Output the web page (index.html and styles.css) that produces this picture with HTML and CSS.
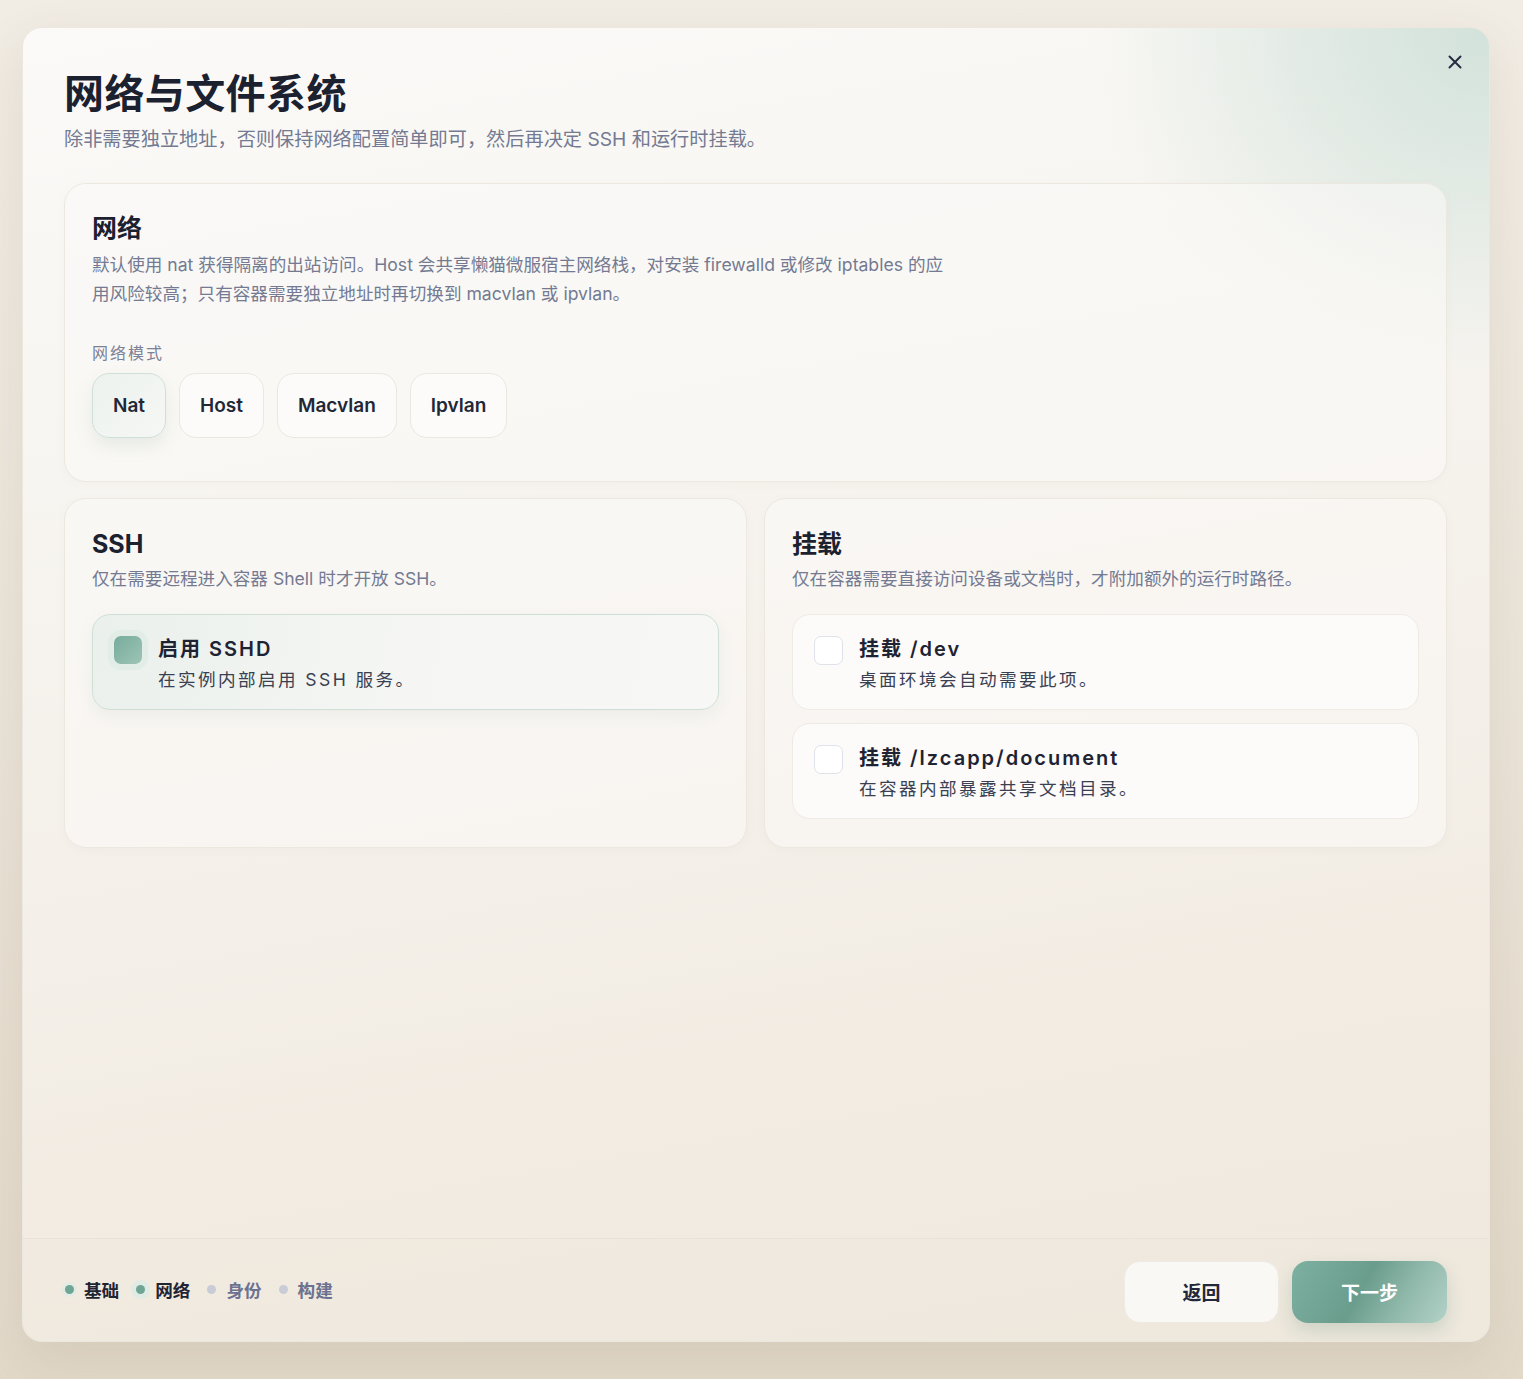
FILE: index.html
```html
<!DOCTYPE html>
<html lang="zh-CN">
<head>
  <meta charset="UTF-8" />
  <meta name="viewport" content="width=device-width, initial-scale=1.0"/>
  <title>网络与文件系统</title>
  <link rel="stylesheet" href="styles.css">
</head>
<body>
  <div class="dialog">
    <button class="close" aria-label="关闭">
      <svg width="18" height="18" viewBox="0 0 18 18"><path d="M3.5 3.5 L14.5 14.5 M14.5 3.5 L3.5 14.5" stroke="#262b40" stroke-width="2" stroke-linecap="round"/></svg>
    </button>

    <div class="content">
      <h1 class="title">网络与文件系统</h1>
      <p class="subtitle">除非需要独立地址，否则保持网络配置简单即可，然后再决定 SSH 和运行时挂载。</p>

      <section class="card network">
        <h2>网络</h2>
        <p class="desc wide">默认使用 nat 获得隔离的出站访问。Host 会共享懒猫微服宿主网络栈，对安装 firewalld 或修改 iptables 的应用风险较高；只有容器需要独立地址时再切换到 macvlan 或 ipvlan。</p>
        <div class="field-label">网络模式</div>
        <div class="modes">
          <button class="mode active">Nat</button>
          <button class="mode">Host</button>
          <button class="mode">Macvlan</button>
          <button class="mode">Ipvlan</button>
        </div>
      </section>

      <div class="row">
        <section class="card">
          <h2>SSH</h2>
          <p class="desc">仅在需要远程进入容器 Shell 时才开放 SSH。</p>
          <div class="options">
            <label class="option checked">
              <span class="box"></span>
              <span class="opt-text">
                <span class="opt-title">启用 SSHD</span>
                <span class="opt-sub">在实例内部启用 SSH 服务。</span>
              </span>
            </label>
          </div>
        </section>

        <section class="card">
          <h2>挂载</h2>
          <p class="desc">仅在容器需要直接访问设备或文档时，才附加额外的运行时路径。</p>
          <div class="options">
            <label class="option">
              <span class="box"></span>
              <span class="opt-text">
                <span class="opt-title">挂载 /dev</span>
                <span class="opt-sub">桌面环境会自动需要此项。</span>
              </span>
            </label>
            <label class="option">
              <span class="box"></span>
              <span class="opt-text">
                <span class="opt-title">挂载 /lzcapp/document</span>
                <span class="opt-sub">在容器内部暴露共享文档目录。</span>
              </span>
            </label>
          </div>
        </section>
      </div>
    </div>

    <footer class="footer">
      <div class="steps">
        <span class="step done"><i></i>基础</span>
        <span class="step current"><i></i>网络</span>
        <span class="step"><i></i>身份</span>
        <span class="step"><i></i>构建</span>
      </div>
      <div class="actions">
        <button class="btn back">返回</button>
        <button class="btn next">下一步</button>
      </div>
    </footer>
  </div>
</body>
</html>
```

FILE: styles.css
```css
body {
  margin: 0;
  padding: 27px 33px 37px 22px;
  min-height: 1379px;
  box-sizing: border-box;
  font-family: Inter, "Noto Sans CJK SC", sans-serif;
  color: #1f2433;
  background:
    linear-gradient(180deg, #f1ece4 0%, #ebe4d9 50%, #e2d9c9 100%);
}

.dialog {
  position: relative;
  height: 1315px;
  border-radius: 20px;
  border: 1px solid #ece7df;
  box-sizing: border-box;
  display: flex;
  flex-direction: column;
  overflow: hidden;
  box-shadow: 0 18px 50px rgba(120, 100, 70, 0.12);
  background:
    radial-gradient(ellipse 500px 430px at 100% 0%, #d2e2db 0%, rgba(213, 227, 220, 0.65) 35%, rgba(240, 236, 228, 0) 80%),
    linear-gradient(170deg, #fbfaf8 0%, #f6f3ee 40%, #f2ece3 75%, #efe8dd 100%);
}

.close {
  position: absolute;
  top: 25px;
  right: 24px;
  width: 20px;
  height: 20px;
  padding: 0;
  border: none;
  background: none;
  cursor: pointer;
}

.content {
  flex: 1;
  padding: 40px 42px 0 41px;
}

.title {
  margin: 0;
  font-size: 40px;
  line-height: 52px;
  font-weight: 700;
  color: #1c2130;
  letter-spacing: 0.4px;
}

.subtitle {
  margin: 6px 0 0;
  font-size: 19.2px;
  line-height: 26px;
  color: #737a92;
}

.card {
  background: rgba(251, 250, 247, 0.55);
  border: 1px solid #ece8e0;
  border-radius: 22px;
  padding: 26px 27px 28px;
  box-shadow: 0 2px 10px rgba(140, 120, 90, 0.04);
}

.network {
  margin-top: 31px;
  padding-bottom: 43px;
}

.card h2 {
  margin: 0;
  font-size: 25px;
  line-height: 36px;
  font-weight: 700;
  color: #1c2130;
}

.desc {
  margin: 4px 0 0;
  font-size: 17.6px;
  line-height: 29px;
  color: #737a92;
}

.desc.wide {
  max-width: 862px;
}

.field-label {
  margin-top: 32px;
  font-size: 16px;
  color: #7b8197;
  letter-spacing: 2px;
}

.modes {
  display: flex;
  gap: 13px;
  margin-top: 9px;
}

.mode {
  height: 65px;
  padding: 0 20px;
  border-radius: 17px;
  border: 1px solid #ebe8e2;
  background: #fcfbf9;
  font-family: inherit;
  font-size: 19px;
  font-weight: 600;
  color: #222738;
  cursor: pointer;
}

.mode.active {
  background: linear-gradient(135deg, #ecf2ef, #f6f7f4);
  border-color: #cfe0d9;
  box-shadow: 0 8px 18px rgba(90, 130, 115, 0.12);
}

.row {
  display: grid;
  grid-template-columns: 1fr 1fr;
  gap: 17px;
  margin-top: 16px;
}

.row .card {
  height: 350px;
  box-sizing: border-box;
  padding-top: 27px;
}

.row .desc {
  margin-top: 2px;
}

.options {
  display: flex;
  flex-direction: column;
  gap: 13px;
  margin-top: 21px;
}

.option {
  display: flex;
  align-items: flex-start;
  gap: 16px;
  height: 96px;
  box-sizing: border-box;
  padding: 21px 21px 20px;
  border-radius: 18px;
  border: 1px solid #eeebe5;
  background: #fcfbf9;
  cursor: pointer;
}

.option.checked {
  background: linear-gradient(100deg, #eaf0ec 0%, #f5f6f3 50%, #f7f8f6 100%);
  border-color: #cfdfd8;
  box-shadow: 0 6px 16px rgba(90, 130, 115, 0.08);
}

.box {
  flex: none;
  width: 27px;
  height: 27px;
  border-radius: 7px;
  border: 1px solid #dfe2ea;
  background: #fff;
}

.option.checked .box {
  border: none;
  width: 28px;
  height: 28px;
  background: linear-gradient(135deg, #77ac9c, #9dc4b6);
  box-shadow: 0 0 0 6px #e2ede8;
}

.opt-text {
  display: flex;
  flex-direction: column;
}

.opt-title {
  font-size: 20px;
  line-height: 26px;
  font-weight: 600;
  letter-spacing: 2px;
  color: #1e2333;
}

.opt-sub {
  margin-top: 6px;
  font-size: 17.6px;
  line-height: 24px;
  letter-spacing: 2.4px;
  color: #3a3f52;
}

.footer {
  display: flex;
  align-items: center;
  justify-content: space-between;
  height: 103px;
  box-sizing: border-box;
  padding: 3px 42px 0 42px;
  border-top: 1px solid #e8e2d8;
  background: rgba(238, 232, 222, 0.35);
}

.steps {
  display: flex;
  align-items: center;
  gap: 17px;
  margin-bottom: 4px;
}

.step {
  display: flex;
  align-items: center;
  gap: 10px;
  font-size: 17.6px;
  font-weight: 700;
  color: #6c7290;
}

.step i {
  width: 9px;
  height: 9px;
  border-radius: 50%;
  background: #c9ccd6;
}

.step.done,
.step.current {
  color: #1f2433;
}

.step.done i,
.step.current i {
  background: #6fa594;
  box-shadow: 0 0 0 3px #e2ebe6;
}

.step.current i {
  box-shadow: 0 0 0 5px #e0ebe5;
}

.actions {
  display: flex;
  gap: 13px;
}

.btn {
  width: 155px;
  height: 62px;
  border-radius: 16px;
  border: none;
  font-family: inherit;
  font-size: 19px;
  font-weight: 700;
  cursor: pointer;
}

.btn.back {
  background: #faf8f5;
  color: #23283a;
  border: 1px solid #efebe4;
}

.btn.next {
  color: #fff;
  background: linear-gradient(120deg, #7cb0a0 0%, #6b9d8d 45%, #8fb8aa 70%, #b3d2c7 100%);
  box-shadow: 0 8px 18px rgba(90, 130, 115, 0.22);
}
```
